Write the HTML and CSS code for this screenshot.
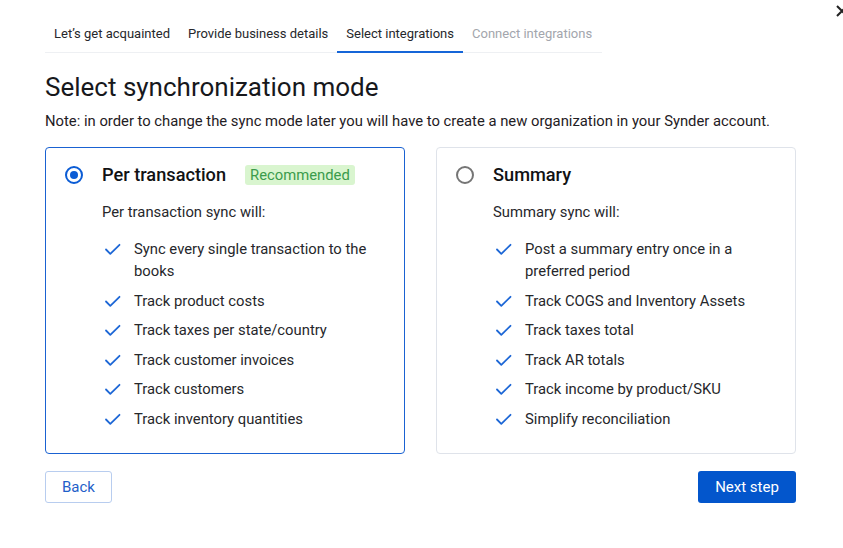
FILE: index.html
```html
<!DOCTYPE html>
<html lang="en">
<head>
<meta charset="utf-8">
<title>Select synchronization mode</title>
<link rel="stylesheet" href="styles.css">
</head>
<body>
<button class="close" aria-label="Close">
  <svg width="12" height="12" viewBox="0 0 12 12"><path d="M1 1L11 11M11 1L1 11" stroke="#222" stroke-width="2" fill="none"/></svg>
</button>
<main class="page">
  <nav class="tabs">
    <span class="tab">Let’s get acquainted</span>
    <span class="tab">Provide business details</span>
    <span class="tab active">Select integrations</span>
    <span class="tab disabled">Connect integrations</span>
  </nav>

  <h1 class="title">Select synchronization mode</h1>
  <p class="note">Note: in order to change the sync mode later you will have to create a new organization in your Synder account.</p>

  <div class="cards">
    <section class="card selected">
      <div class="card-head">
        <span class="radio checked"></span>
        <h2 class="card-title">Per transaction</h2>
        <span class="badge">Recommended</span>
      </div>
      <div class="card-body">
        <p class="lead">Per transaction sync will:</p>
        <ul class="list">
          <li><svg class="check" viewBox="0 0 18 18"><path d="M3 9.5l4.3 4.3L16.5 4.8"/></svg><span>Sync every single transaction to the books</span></li>
          <li><svg class="check" viewBox="0 0 18 18"><path d="M3 9.5l4.3 4.3L16.5 4.8"/></svg><span>Track product costs</span></li>
          <li><svg class="check" viewBox="0 0 18 18"><path d="M3 9.5l4.3 4.3L16.5 4.8"/></svg><span>Track taxes per state/country</span></li>
          <li><svg class="check" viewBox="0 0 18 18"><path d="M3 9.5l4.3 4.3L16.5 4.8"/></svg><span>Track customer invoices</span></li>
          <li><svg class="check" viewBox="0 0 18 18"><path d="M3 9.5l4.3 4.3L16.5 4.8"/></svg><span>Track customers</span></li>
          <li><svg class="check" viewBox="0 0 18 18"><path d="M3 9.5l4.3 4.3L16.5 4.8"/></svg><span>Track inventory quantities</span></li>
        </ul>
      </div>
    </section>

    <section class="card">
      <div class="card-head">
        <span class="radio"></span>
        <h2 class="card-title">Summary</h2>
      </div>
      <div class="card-body">
        <p class="lead">Summary sync will:</p>
        <ul class="list">
          <li><svg class="check" viewBox="0 0 18 18"><path d="M3 9.5l4.3 4.3L16.5 4.8"/></svg><span>Post a summary entry once in a preferred period</span></li>
          <li><svg class="check" viewBox="0 0 18 18"><path d="M3 9.5l4.3 4.3L16.5 4.8"/></svg><span>Track COGS and Inventory Assets</span></li>
          <li><svg class="check" viewBox="0 0 18 18"><path d="M3 9.5l4.3 4.3L16.5 4.8"/></svg><span>Track taxes total</span></li>
          <li><svg class="check" viewBox="0 0 18 18"><path d="M3 9.5l4.3 4.3L16.5 4.8"/></svg><span>Track AR totals</span></li>
          <li><svg class="check" viewBox="0 0 18 18"><path d="M3 9.5l4.3 4.3L16.5 4.8"/></svg><span>Track income by product/SKU</span></li>
          <li><svg class="check" viewBox="0 0 18 18"><path d="M3 9.5l4.3 4.3L16.5 4.8"/></svg><span>Simplify reconciliation</span></li>
        </ul>
      </div>
    </section>
  </div>

  <div class="actions">
    <button class="btn btn-outline">Back</button>
    <button class="btn btn-primary">Next step</button>
  </div>
</main>
</body>
</html>
```

FILE: styles.css
```css
* { box-sizing: border-box; }

html, body {
  margin: 0;
  padding: 0;
  background: #ffffff;
  overflow: hidden;
}

body {
  font-family: Roboto, "Liberation Sans", Arial, sans-serif;
  color: #1b1b1f;
  position: relative;
  width: 843px;
  height: 548px;
}

.close {
  position: absolute;
  top: 5px;
  right: -5px;
  padding: 0;
  border: 0;
  background: transparent;
  width: 12px;
  height: 12px;
}
.close svg { display: block; }

.page {
  width: 751px;
  margin-left: 45px;
  padding-top: 15px;
}

/* Tabs */
.tabs {
  display: flex;
  width: 557px;
  border-bottom: 1px solid #eef0f3;
}
.tab {
  font-size: 13px;
  line-height: 37px;
  height: 38px;
  padding: 0 9px;
  color: #26272b;
  white-space: nowrap;
  border-bottom: 2px solid transparent;
  margin-bottom: -1px;
}
.tab.active {
  border-bottom-color: #1565d8;
}
.tab.disabled {
  color: #a3a6ad;
}

/* Heading */
.title {
  font-size: 26px;
  font-weight: 400;
  line-height: 30px;
  margin: 19px 0 0;
  color: #17181c;
}
.note {
  font-size: 14.8px;
  line-height: 20px;
  margin: 9px 0 0;
  color: #1f2024;
}

/* Cards */
.cards {
  display: grid;
  grid-template-columns: 360px 360px;
  column-gap: 31px;
  margin-top: 16px;
}
.card {
  border: 1px solid #dfe3ea;
  border-radius: 4px;
  padding: 15px 20px 23px 19px;
  height: 307px;
}
.card.selected {
  border: 1.5px solid #1a62d2;
}

.card-head {
  display: flex;
  align-items: center;
  height: 24px;
}
.radio {
  width: 18px;
  height: 18px;
  border-radius: 50%;
  border: 2px solid #757575;
  flex: none;
  margin-right: 19px;
  position: relative;
}
.radio.checked {
  border-color: #0b5cd5;
}
.radio.checked::after {
  content: "";
  position: absolute;
  left: 3px;
  top: 3px;
  width: 8px;
  height: 8px;
  border-radius: 50%;
  background: #0b5cd5;
}
.card-title {
  font-size: 18.2px;
  font-weight: 500;
  line-height: 24px;
  margin: 0;
  color: #111214;
}
.badge {
  margin-left: 19px;
  background: #d9f5cf;
  color: #3b9b4c;
  font-size: 14.8px;
  line-height: 20px;
  padding: 0 5px;
  border-radius: 3px;
}

.card-body {
  padding-left: 37px;
}
.lead {
  font-size: 14.8px;
  line-height: 20px;
  margin: 15px 0 0;
  color: #26272b;
}
.list {
  list-style: none;
  margin: 16px 0 0;
  padding: 0;
  display: flex;
  flex-direction: column;
  row-gap: 7.6px;
}
.list li {
  display: flex;
  align-items: flex-start;
  column-gap: 13px;
  font-size: 14.8px;
  line-height: 22px;
  color: #26272b;
  padding-right: 14px;
}
.check {
  width: 18px;
  height: 18px;
  flex: none;
  margin-top: 2px;
  margin-left: 1px;
  fill: none;
  stroke: #1d67d6;
  stroke-width: 1.8;
  stroke-linecap: round;
  stroke-linejoin: round;
}

/* Actions */
.actions {
  display: flex;
  justify-content: space-between;
  margin-top: 17px;
}
.btn {
  font-family: Roboto, "Liberation Sans", Arial, sans-serif;
  font-size: 15px;
  height: 32px;
  border-radius: 3px;
  padding: 0 16px;
  cursor: pointer;
}
.btn-outline {
  width: 67px;
  background: #ffffff;
  color: #1f5fc9;
  border: 1px solid #b8cdef;
}
.btn-primary {
  width: 98px;
  background: #0356cc;
  color: #ffffff;
  border: 0;
}
```
